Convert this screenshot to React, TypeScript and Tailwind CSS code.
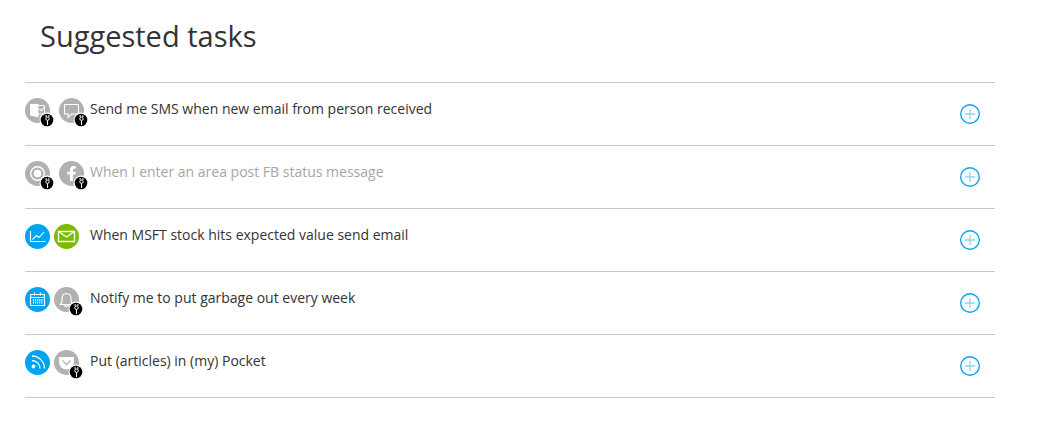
import type { ReactNode } from 'react';
import { clsx } from 'clsx';

type IconName = 'outlook' | 'sms' | 'location' | 'facebook' | 'stock' | 'mail' | 'calendar' | 'bell' | 'rss' | 'pocket';

interface Channel {
  icon: IconName;
  color: 'gray' | 'blue' | 'green';
  needsConnection?: boolean;
}

interface Task {
  id: number;
  title: string;
  disabled?: boolean;
  channels: Channel[];
}

const tasks: Task[] = [
  {
    id: 1,
    title: 'Send me SMS when new email from person received',
    channels: [
      { icon: 'outlook', color: 'gray', needsConnection: true },
      { icon: 'sms', color: 'gray', needsConnection: true },
    ],
  },
  {
    id: 2,
    title: 'When I enter an area post FB status message',
    disabled: true,
    channels: [
      { icon: 'location', color: 'gray', needsConnection: true },
      { icon: 'facebook', color: 'gray', needsConnection: true },
    ],
  },
  {
    id: 3,
    title: 'When MSFT stock hits expected value send email',
    channels: [
      { icon: 'stock', color: 'blue' },
      { icon: 'mail', color: 'green' },
    ],
  },
  {
    id: 4,
    title: 'Notify me to put garbage out every week',
    channels: [
      { icon: 'calendar', color: 'blue' },
      { icon: 'bell', color: 'gray', needsConnection: true },
    ],
  },
  {
    id: 5,
    title: 'Put (articles) in (my) Pocket',
    channels: [
      { icon: 'rss', color: 'blue' },
      { icon: 'pocket', color: 'gray', needsConnection: true },
    ],
  },
];

// All glyphs are drawn on a 25x25 grid, the size of the round tile
const glyphs: Record<IconName, ReactNode> = {
  outlook: (
    <>
      <path d="M5 6h8.500v13.500L5 17.500z" fill="white" stroke="none" />
      <path d="M13.500 7.500h6v8.500h-6" strokeWidth=".9" />
      <path d="M14.500 11l1.800 1.800 3.200-4" />
    </>
  ),
  sms: <path d="M5.500 6.500h14v9.500h-7l-3.500 3.500v-3.500h-3.500z" />,
  location: (
    <>
      <circle cx="12.500" cy="12.500" r="6.800" strokeWidth="1.400" />
      <circle cx="12.500" cy="12.500" r="3.800" fill="white" stroke="none" />
    </>
  ),
  facebook: (
    <path
      d="M11 20v-6.500H8.300v-2.800H11V9c0-2.600 1.400-4 3.700-4h2.100v2.700h-1.500c-1 0-1.400.5-1.400 1.300v1.700h2.800l-.4 2.800h-2.400V20z"
      fill="white"
      stroke="none"
    />
  ),
  stock: (
    <>
      <path d="M5.500 7v10.500h15" />
      <path d="M7.500 15.500l4-4 2.500 2 5-5.500" />
    </>
  ),
  mail: (
    <>
      <path d="M4.500 7.500h16v10h-16z" strokeWidth="1.300" />
      <path d="M4.500 7.500l8 5.500 8-5.500" strokeWidth="1.300" />
    </>
  ),
  calendar: (
    <>
      <path d="M5.500 7.500h14v11h-14zM5.500 10.500h14M9.500 5.500v3M15.500 5.500v3" />
      <path d="M8 13h9.500M8 15.500h9.500" strokeWidth="1.800" strokeDasharray="1 1.100" />
    </>
  ),
  bell: (
    <>
      <path d="M6.500 17.500c1.300-1 1.500-2 1.500-5.500 0-3.500 1.700-5.500 4.500-5.500s4.500 2 4.500 5.500c0 3.500.2 4.500 1.500 5.500z" />
      <path d="M10.500 18c.5 2 3.500 2 4 0" />
    </>
  ),
  rss: (
    <>
      <circle cx="8.500" cy="16.500" r="1.900" fill="white" stroke="none" />
      <path d="M7 10.500a8 8 0 0 1 8 8M7 6a12.500 12.500 0 0 1 12.500 12.500" strokeWidth="1.300" />
    </>
  ),
  pocket: (
    <>
      <path d="M5 7h15v5a7.500 7.500 0 0 1-15 0z" fill="white" stroke="none" />
      <path d="M8.500 10.500l4 4 4-4" stroke="#b1b1b1" strokeWidth="1.300" />
    </>
  ),
};

function ConnectBadge() {
  return (
    <svg className="absolute left-3.5 top-3.5 size-4" viewBox="0 0 16 16" fill="none" aria-hidden="true">
      <circle cx="8" cy="8" r="7.500" fill="white" />
      <circle cx="8" cy="8" r="6.300" fill="black" />
      <path d="M7.100 3v2M9.900 3v2M8.500 8.500V13" stroke="white" />
      <circle cx="8.500" cy="6.700" r="1.700" stroke="white" />
    </svg>
  );
}

function ChannelIcon({ channel }: { channel: Channel }) {
  return (
    <div
      className={clsx(
        'relative size-[25px] shrink-0 rounded-full',
        channel.color === 'gray' && 'bg-[#b1b1b1]',
        channel.color === 'blue' && 'bg-[#00a4f0]',
        channel.color === 'green' && 'bg-[#7cbb00]',
        channel.needsConnection ? 'mr-[9px]' : 'mr-1'
      )}
    >
      <svg className="size-[25px]" viewBox="0 0 25 25" fill="none" stroke="white" strokeWidth="1.100" aria-hidden="true">
        {glyphs[channel.icon]}
      </svg>
      {channel.needsConnection && <ConnectBadge />}
    </div>
  );
}

function TaskRow({ task }: { task: Task }) {
  return (
    <li className="flex items-start border-b border-[#c8c8c8] pt-[15px] pb-5 pr-[15px]">
      <div className="flex w-[65px] shrink-0">
        {task.channels.map(channel => (
          <ChannelIcon key={channel.icon} channel={channel} />
        ))}
      </div>
      <p className={clsx('flex-1 text-sm leading-[22px]', task.disabled ? 'text-[#a6a6a6]' : 'text-[#333333]')}>
        {task.title}
      </p>
      <button type="button" aria-label={`Add ${task.title}`} className="mt-[6px] mb-px size-5 cursor-pointer">
        <svg className="size-5" viewBox="0 0 20 20" fill="none" aria-hidden="true">
          <circle cx="10" cy="10" r="9.300" stroke="#0fa5ea" strokeWidth="1.400" />
          <path d="M10 5v10M5 10h10" stroke="#8fd3f5" strokeWidth="1.300" />
        </svg>
      </button>
    </li>
  );
}

export default function App() {
  return (
    <main className="bg-white pl-[25px] pr-[45px] pt-4 font-['Open_Sans','Noto_Sans',sans-serif]">
      <h1 className="pl-[15px] mb-[26px] text-[29px] leading-10 text-[#333333]">Suggested tasks</h1>
      <ul className="border-t border-[#c8c8c8]">
        {tasks.map(task => (
          <TaskRow key={task.id} task={task} />
        ))}
      </ul>
    </main>
  );
}
